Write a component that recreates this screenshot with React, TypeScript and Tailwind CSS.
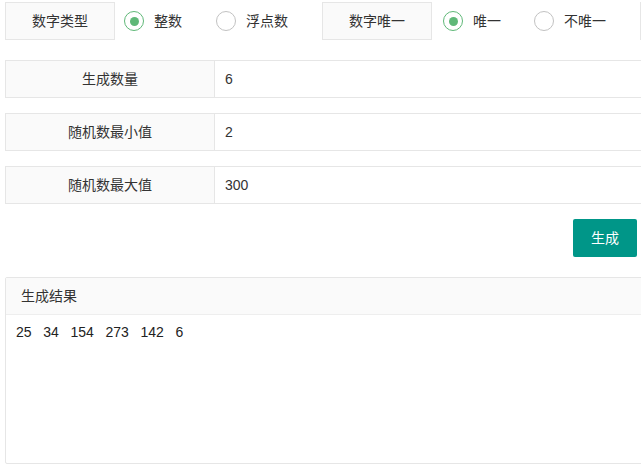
import React from 'react'

function Radio({ checked, label, className }: { checked: boolean; label: string; className?: string }) {
  return (
    <div className={`flex items-center ${className ?? ''}`}>
      <div
        className={`w-[20px] h-[20px] rounded-full border-[1.5px] flex items-center justify-center ${
          checked ? 'border-[#5FB878]' : 'border-[#c2c2c2]'
        }`}
      >
        {checked && <div className="w-[9px] h-[9px] rounded-full bg-[#5FB878]" />}
      </div>
      <span className="ml-[10px] leading-[20px]">{label}</span>
    </div>
  )
}

function FormRow({ label, value }: { label: string; value: string }) {
  return (
    <div className="flex h-[38px] border border-[#e6e6e6] w-[760px]">
      <div className="w-[209px] bg-[#fafafa] border-r border-[#e6e6e6] flex items-center justify-center">
        {label}
      </div>
      <div className="flex-1 flex items-center pl-[10px]">{value}</div>
    </div>
  )
}

export default function App() {
  const results = [25, 34, 154, 273, 142, 6]

  return (
    <div className="w-[641px] h-[470px] overflow-hidden bg-white text-[14px] text-[#333] font-['Liberation_Sans','Noto_Sans_CJK_SC',sans-serif]">
      <div className="pl-[5px] pt-[2px] w-[800px]">
        {/* top options */}
        <div className="flex items-center h-[38px]">
          <div className="w-[110px] h-[38px] bg-[#fafafa] border border-[#e6e6e6] flex items-center justify-center">
            数字类型
          </div>
          <Radio checked label="整数" className="ml-[9px]" />
          <Radio checked={false} label="浮点数" className="ml-[34px]" />
          <div className="ml-[34px] w-[110px] h-[38px] bg-[#fafafa] border border-[#e6e6e6] flex items-center justify-center">
            数字唯一
          </div>
          <Radio checked label="唯一" className="ml-[11px]" />
          <Radio checked={false} label="不唯一" className="ml-[33px]" />
          <div className="ml-[34px] w-[110px] h-[38px] bg-[#fafafa] border border-[#e6e6e6]" />
        </div>

        {/* inputs */}
        <div className="mt-[20px] flex flex-col gap-[15px]">
          <FormRow label="生成数量" value="6" />
          <FormRow label="随机数最小值" value="2" />
          <FormRow label="随机数最大值" value="300" />
        </div>

        <div className="mt-[15px] w-[632px] flex justify-end">
          <button className="w-[64px] h-[38px] rounded-[2px] bg-[#009688] text-white">生成</button>
        </div>

        {/* result panel */}
        <div className="mt-[20px] w-[760px] h-[187px] border border-[#e6e6e6] rounded-[2px] flex flex-col">
          <div className="h-[37px] bg-[#fafafa] border-b border-[#eeeeee] flex items-center pl-[15px]">生成结果</div>
          <div className="flex-1 pl-[10px] pt-[7px] leading-[20px] whitespace-pre text-[#222]">
            {results.join('   ')}
          </div>
        </div>
      </div>
    </div>
  )
}
